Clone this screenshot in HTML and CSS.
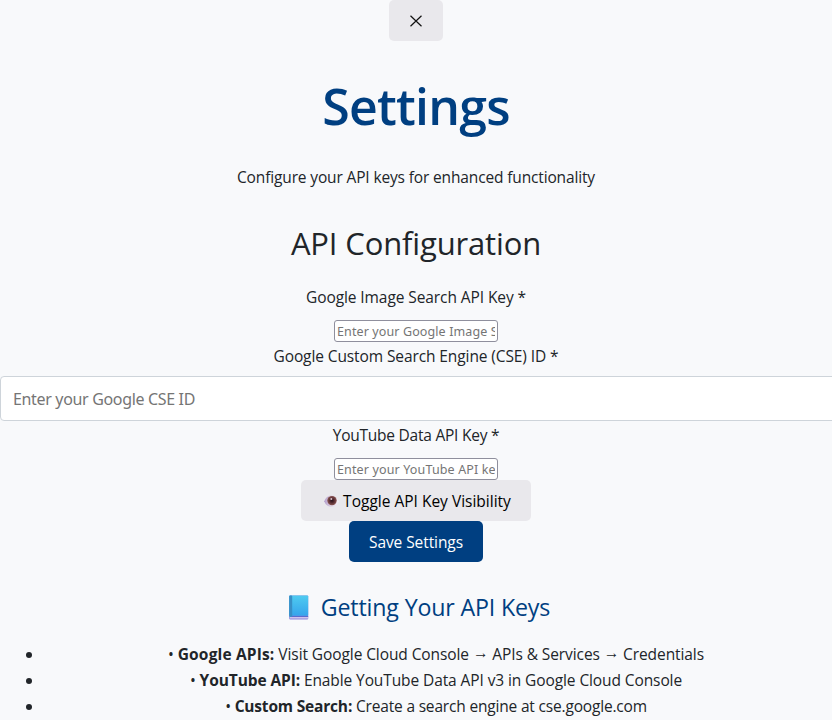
FILE: index.html
```
<!DOCTYPE html>
<html lang="en">
<head>
<meta charset="utf-8">
<title>Settings</title>
<link rel="stylesheet" href="styles.css">
</head>
<body>
<main class="settings">
  <button class="btn btn-close" aria-label="Close"><svg width="12" height="12" viewBox="0 0 12 12"><path d="M.5.7l11 10.600M11.500.7L.5 11.300" stroke="#111" stroke-width="1.2" fill="none"/></svg></button>
  <h1>Settings</h1>
  <p class="intro">Configure your API keys for enhanced functionality</p>
  <h2>API Configuration</h2>
  <label class="label-image" for="image-key">Google Image Search API Key *</label>
  <input class="key-input key-image" id="image-key" type="text" placeholder="Enter your Google Image Search API key">
  <label class="label-cse" for="cse">Google Custom Search Engine (CSE) ID *</label>
  <input class="cse-input" id="cse" type="text" placeholder="Enter your Google CSE ID">
  <label class="label-youtube" for="youtube-key">YouTube Data API Key *</label>
  <input class="key-input key-youtube" id="youtube-key" type="text" placeholder="Enter your YouTube API key">
  <button class="btn btn-toggle">
    <svg class="eye" width="15" height="14" viewBox="0 0 15 14">
      <defs>
        <linearGradient id="eye-white" x1="0" x2="1"><stop offset="0" stop-color="#b29ccb"/><stop offset=".4" stop-color="#d9cce0"/><stop offset="1" stop-color="#f6f1f8"/></linearGradient>
        <radialGradient id="iris" cx=".5" cy=".5" r=".5"><stop offset="0" stop-color="#27131b"/><stop offset=".35" stop-color="#4a2229"/><stop offset="1" stop-color="#8b5653"/></radialGradient>
      </defs>
      <path d="M.3 7.300C2 3 4.500 1.500 7.500 1.500S13 3.500 14.700 7.200C13 11.500 11 12.800 7.500 12.800S2 11.500 .3 7.300Z" fill="url(#eye-white)"/>
      <circle cx="8" cy="6.600" r="4.700" fill="url(#iris)"/>
      <circle cx="7.300" cy="5" r="1" fill="#d9c3cb"/>
    </svg>
    <span>Toggle API Key Visibility</span>
  </button>
  <button class="btn btn-save">Save Settings</button>
  <h3>
    <svg class="book" width="20" height="25" viewBox="0 0 20 25">
      <defs><linearGradient id="cover" x2="0" y2="1"><stop offset="0" stop-color="#4fcbf0"/><stop offset="1" stop-color="#36a4ec"/></linearGradient></defs>
      <rect x=".2" y=".5" width="19" height="24" rx="1" fill="#8d88dc"/>
      <rect x="1" y="21.800" width="18.200" height="1.700" fill="#cfc2ec"/>
      <rect x="1" y="20.800" width="18.200" height="1" fill="#4e62c8"/>
      <rect x=".2" y=".5" width="19" height="20.300" rx="1" fill="url(#cover)"/>
      <rect x=".2" y=".5" width="3" height="21.500" rx="1" fill="#388fc6"/>
    </svg>
    <span>Getting Your API Keys</span>
  </h3>
  <ul>
    <li class="item-google">• <strong>Google APIs:</strong> Visit Google Cloud Console <span class="arrow">→</span> APIs &amp; Services <span class="arrow">→</span> Credentials</li>
    <li class="item-youtube">• <strong>YouTube API:</strong> Enable YouTube Data API v3 in Google Cloud Console</li>
    <li class="item-search">• <strong>Custom Search:</strong> Create a search engine at cse.google.com</li>
  </ul>
</main>
</body>
</html>
```
FILE: styles.css
```
* { box-sizing: border-box; }
html, body { height: 720px; overflow: hidden; }
body {
  margin: 0;
  background: #f8f9fb;
  color: #212529;
  font: 15.5px/26px "Open Sans", "Noto Sans", sans-serif;
}
.settings {
  display: flex;
  flex-direction: column;
  align-items: center;
  white-space: nowrap;
}
.btn {
  display: flex;
  align-items: center;
  justify-content: center;
  flex: none;
  height: 41px;
  padding: 1px 0 0;
  border: 0;
  border-radius: 5px;
  background: #e9e8ec;
  color: #000;
  font: inherit;
}
.btn-close { width: 54px; }
.btn-toggle { width: 230px; gap: 4px; padding-left: 3px; }
.btn-save { width: 134px; background: #003f81; color: #fff; letter-spacing: -.08px; }
h1, h2, h3, p { margin: 0; }
h1 {
  margin-top: 34px;
  color: #003f81;
  font-size: 50px;
  font-weight: 600;
  line-height: 62px;
  letter-spacing: -.75px;
}
.intro { margin-top: 27px; letter-spacing: -.144px; }
h2 {
  margin-top: 34px;
  font-size: 31px;
  font-weight: 400;
  line-height: 38px;
  letter-spacing: -.15px;
}
label { height: 26px; }
.label-image { margin-top: 22px; letter-spacing: -.087px; }
.label-cse { margin-top: 1px; letter-spacing: -.101px; }
.label-youtube { margin-top: 1px; letter-spacing: -.24px; }
input { background: #fff; font-family: "Noto Sans", sans-serif; }
input::placeholder { color: #757575; opacity: 1; }
.key-input {
  width: 164px;
  height: 22px;
  margin-top: 10px;
  padding: 1px 2px;
  border: 1px solid #8f8f9d;
  border-radius: 3px;
  font-size: 12.5px;
}
.key-image { letter-spacing: .11px; }
.key-youtube { letter-spacing: .14px; }
.cse-input {
  align-self: flex-start;
  width: 858px;
  height: 45px;
  margin-top: 7px;
  padding: 0 12px;
  border: 1px solid #ced4da;
  border-radius: 4px;
  font-size: 16px;
  letter-spacing: -.336px;
}
h3 {
  display: flex;
  align-items: center;
  gap: 12px;
  margin-top: 30px;
  padding-left: 7px;
  color: #003f81;
  font-size: 23.2px;
  font-weight: 400;
  line-height: 30px;
  letter-spacing: -.16px;
}
ul {
  align-self: stretch;
  margin: 19px 0 0;
  padding-left: 44px;
  text-align: center;
}
li { text-indent: -4px; }
.item-google { letter-spacing: -.09px; }
.item-google strong { letter-spacing: .16px; }
.arrow { display: inline-block; height: 24px; line-height: 22px; vertical-align: top; text-indent: 0; }
.item-youtube { letter-spacing: -.1px; }
.item-search { letter-spacing: -.18px; }
```
